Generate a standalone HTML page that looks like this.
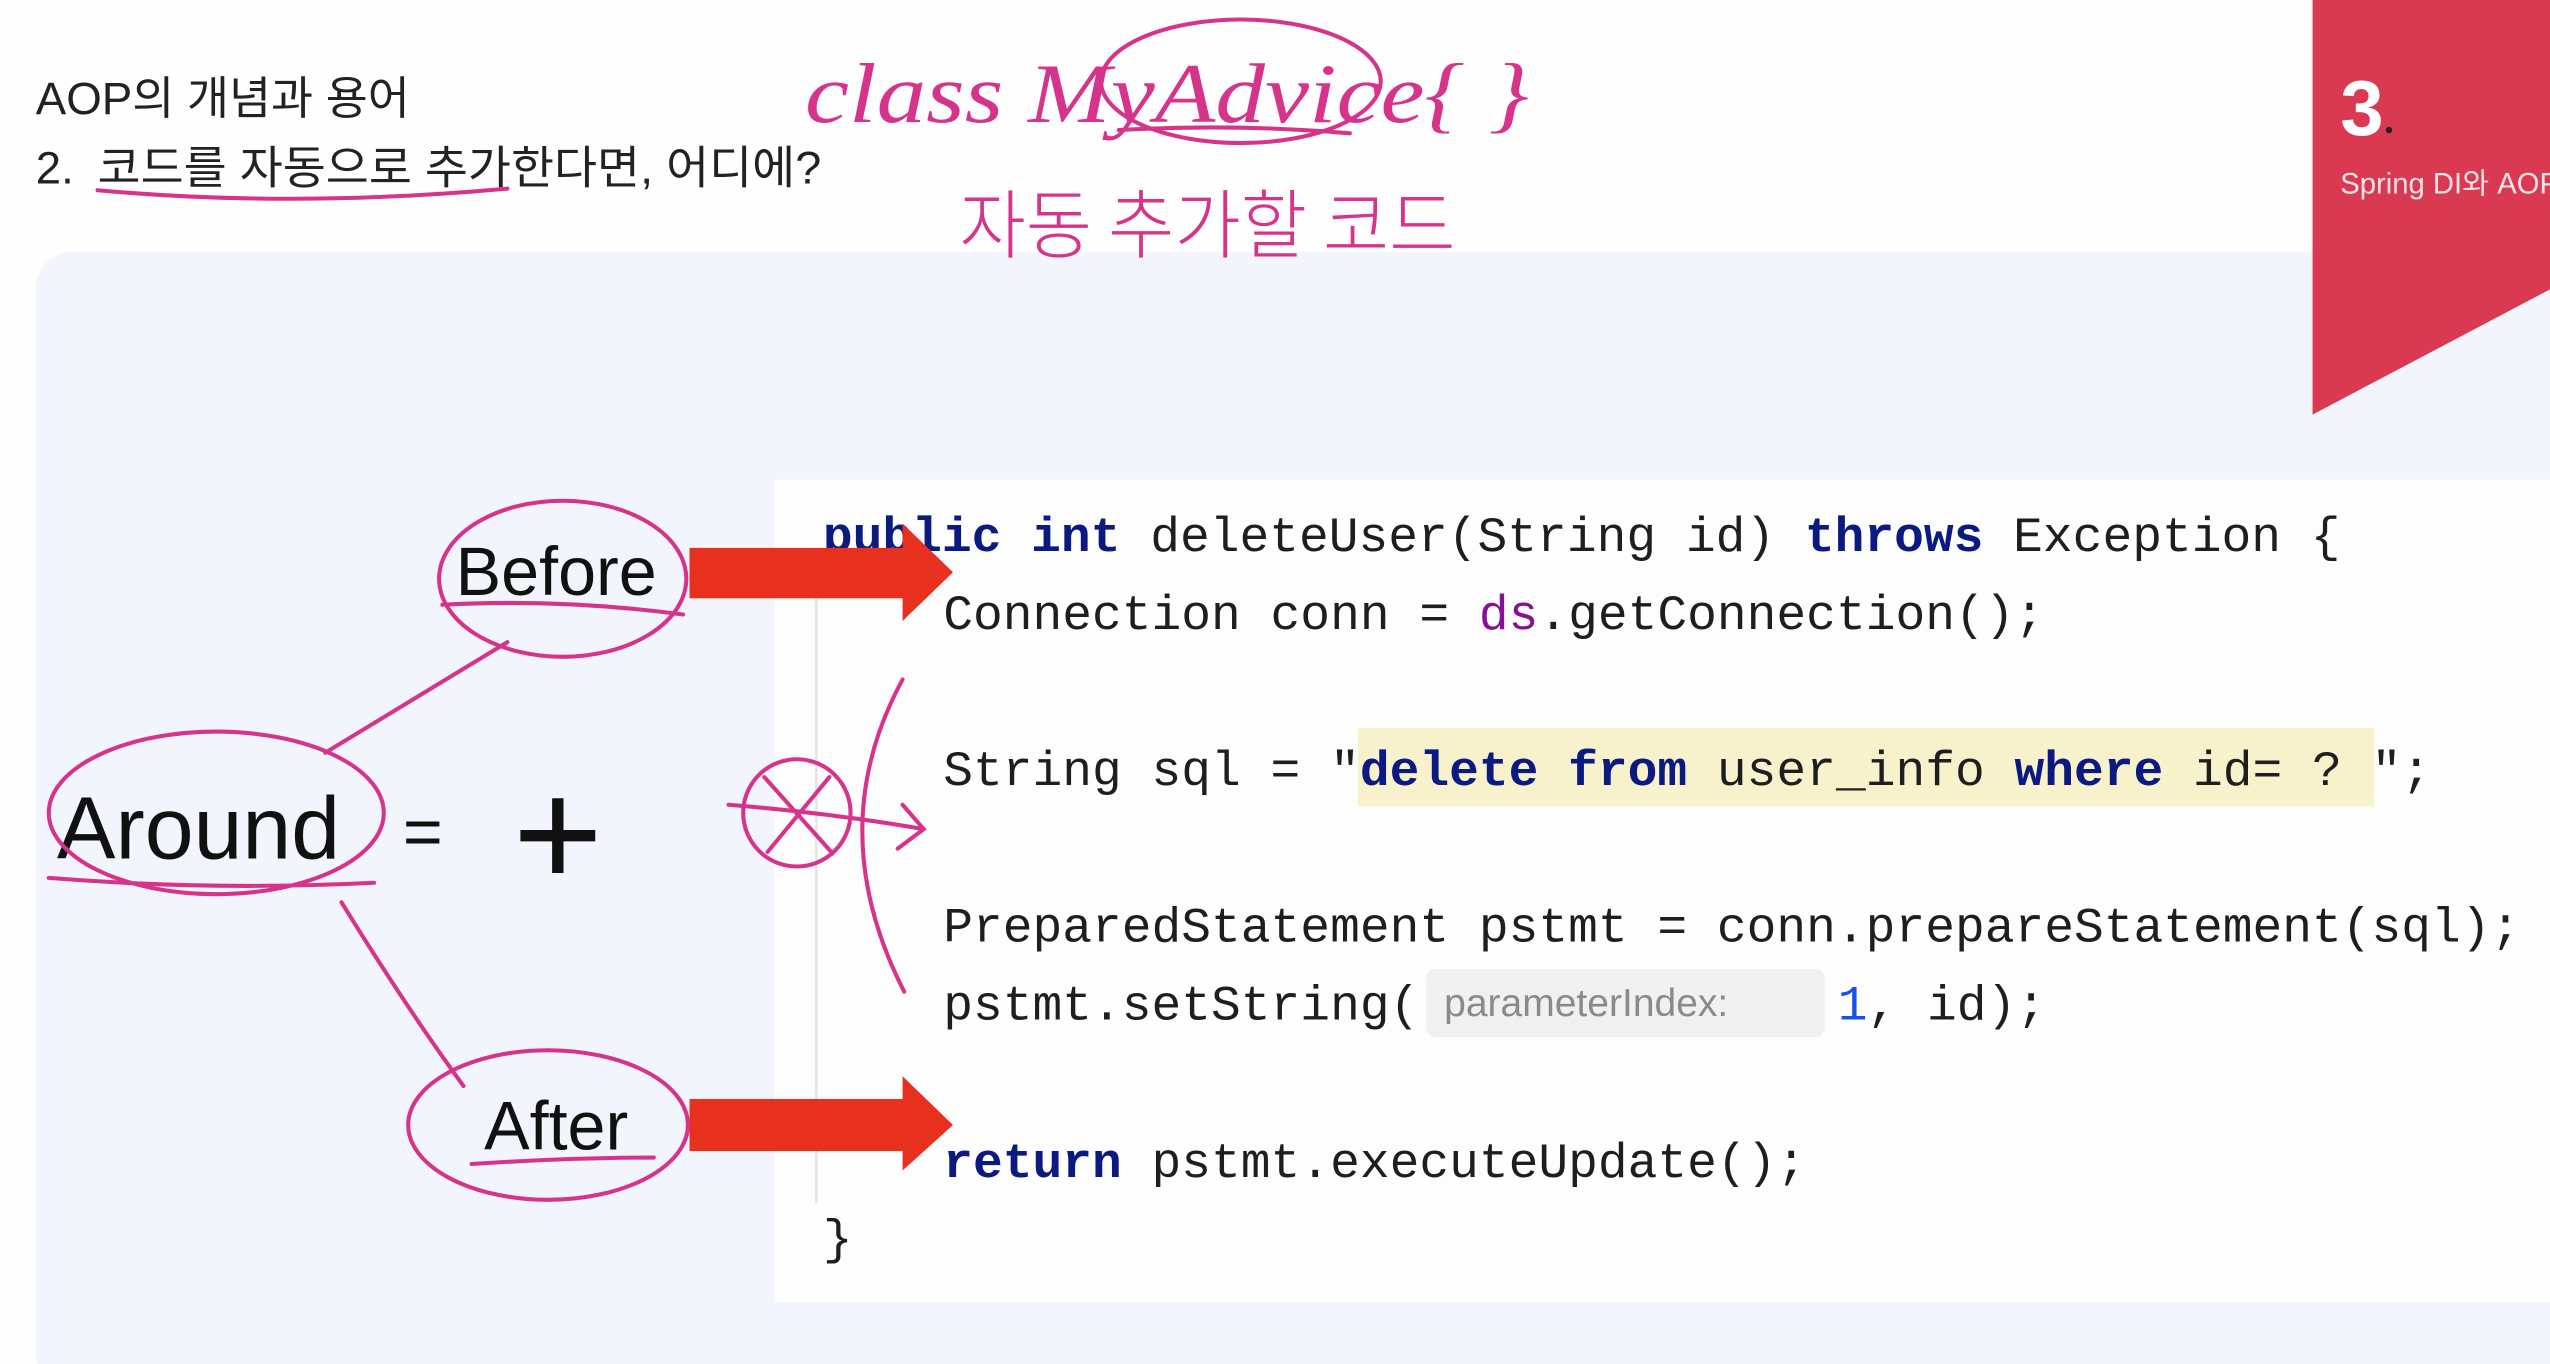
<!DOCTYPE html>
<html><head><meta charset="utf-8"><style>
html,body{margin:0;padding:0;background:#fff;overflow:hidden;width:2550px;height:1364px}
svg{display:block}
</style></head><body>
<svg width="2550" height="1364" viewBox="0 0 1568 839" preserveAspectRatio="none" xmlns="http://www.w3.org/2000/svg">
<rect width="1568" height="839" fill="#fefefe"/>
<rect x="22" y="155" width="1560" height="700" rx="22" fill="#f2f5fb"/>
<rect x="476" y="295" width="1092" height="506" fill="#fdfdfd"/>
<polygon points="1422,0 1568,0 1568,178 1422,255" fill="#d93a52"/>
<text x="1439" y="83" font-family="Liberation Sans, sans-serif" font-size="48" font-weight="bold" fill="#fff">3</text>
<circle cx="1469" cy="80" r="2" fill="#222"/>
<text x="1439" y="119" font-family="Liberation Sans, 'Noto Sans CJK KR', sans-serif" font-size="18" fill="#fbe3e7">Spring DI와 AOP</text>

<g font-family="Liberation Sans, 'Noto Sans CJK KR', sans-serif" font-size="28" fill="#222">
<text x="22" y="70" textLength="230" lengthAdjust="spacingAndGlyphs">AOP의 개념과 용어</text>
<text x="22" y="113">2.</text>
<text x="60" y="113" textLength="445" lengthAdjust="spacingAndGlyphs">코드를 자동으로 추가한다면, 어디에?</text>
</g>

<g font-family="Liberation Mono, monospace" font-size="30.5" fill="#1e1e1e">
<rect x="835" y="448" width="625" height="48" fill="#f7f1cc"/>
<rect x="877" y="596" width="245" height="42" rx="6" fill="#f0f0f0"/>
<line x1="502" y1="362" x2="502" y2="740" stroke="#e4e4e4" stroke-width="1.5"/>
<text x="506" y="339" xml:space="preserve"><tspan fill="#0a1a80" font-weight="bold">public int</tspan> deleteUser(String id) <tspan fill="#0a1a80" font-weight="bold">throws</tspan> Exception {</text>
<text x="580" y="387" xml:space="preserve">Connection conn = <tspan fill="#871094">ds</tspan>.getConnection();</text>
<text x="580" y="483" xml:space="preserve">String sql = "<tspan fill="#0a1a80" font-weight="bold">delete from</tspan> user_info <tspan fill="#0a1a80" font-weight="bold">where</tspan> id= ? ";</text>
<text x="580" y="579" xml:space="preserve">PreparedStatement pstmt = conn.prepareStatement(sql);</text>
<text x="580" y="627" xml:space="preserve">pstmt.setString(</text>
<text x="888" y="625" font-family="Liberation Sans, sans-serif" font-size="24" fill="#8a8a8a">parameterIndex:</text>
<text x="1130" y="627" xml:space="preserve"><tspan fill="#1750eb">1</tspan>, id);</text>
<text x="580" y="724" xml:space="preserve"><tspan fill="#0a1a80" font-weight="bold">return</tspan> pstmt.executeUpdate();</text>
<text x="506" y="771">}</text>
</g>

<g fill="#e8301f">
<rect x="424" y="337" width="132" height="31"/>
<polygon points="555,322 586,352 555,382"/>
<rect x="424" y="676" width="132" height="32"/>
<polygon points="555,662 586,692 555,720"/>
</g>

<g font-family="Liberation Sans, sans-serif" fill="#111">
<text x="342" y="366" font-size="42" text-anchor="middle">Before</text>
<text x="35" y="528" font-size="54">Around</text>
<text x="260" y="526" font-size="42" text-anchor="middle">=</text>
<text x="342" y="707" font-size="42" text-anchor="middle">After</text>
</g>
<g stroke="#111" stroke-width="7">
<line x1="320" y1="514" x2="366" y2="514"/>
<line x1="343" y1="491" x2="343" y2="537"/>
</g>

<g fill="none" stroke="#d6338a" stroke-width="2.5" stroke-linecap="round">
<ellipse cx="346" cy="356" rx="76" ry="48"/>
<ellipse cx="133" cy="500" rx="103" ry="50"/>
<ellipse cx="337" cy="692" rx="86" ry="46"/>
<path d="M272,372 Q345,368 420,378"/>
<path d="M30,540 Q130,548 230,543"/>
<path d="M290,716 Q350,712 402,712"/>
<path d="M312,395 L200,463"/>
<path d="M210,555 Q250,620 285,668"/>
<circle cx="490" cy="500" r="33"/>
<path d="M470,478 L512,525 M510,478 L472,524 M448,495 Q510,500 568,510 M555,495 L568,510 L552,522"/>
<path d="M555,418 Q505,510 556,610"/>
<path d="M60,117 Q180,128 312,116"/>
<ellipse cx="763" cy="50" rx="86" ry="38"/>
<path d="M688,80 Q760,76 830,82"/>
</g>
<g font-family="Liberation Serif, 'Noto Sans CJK KR', serif" font-style="italic" fill="#d6338a">
<text x="495" y="75" font-size="52" textLength="445" lengthAdjust="spacingAndGlyphs">class MyAdvice{ }</text>
<text x="590" y="155" font-size="46" font-family="'Noto Sans CJK KR', sans-serif" font-style="normal" font-weight="300" textLength="305" lengthAdjust="spacingAndGlyphs">자동 추가할 코드</text>
</g>
</svg>
</body></html>
